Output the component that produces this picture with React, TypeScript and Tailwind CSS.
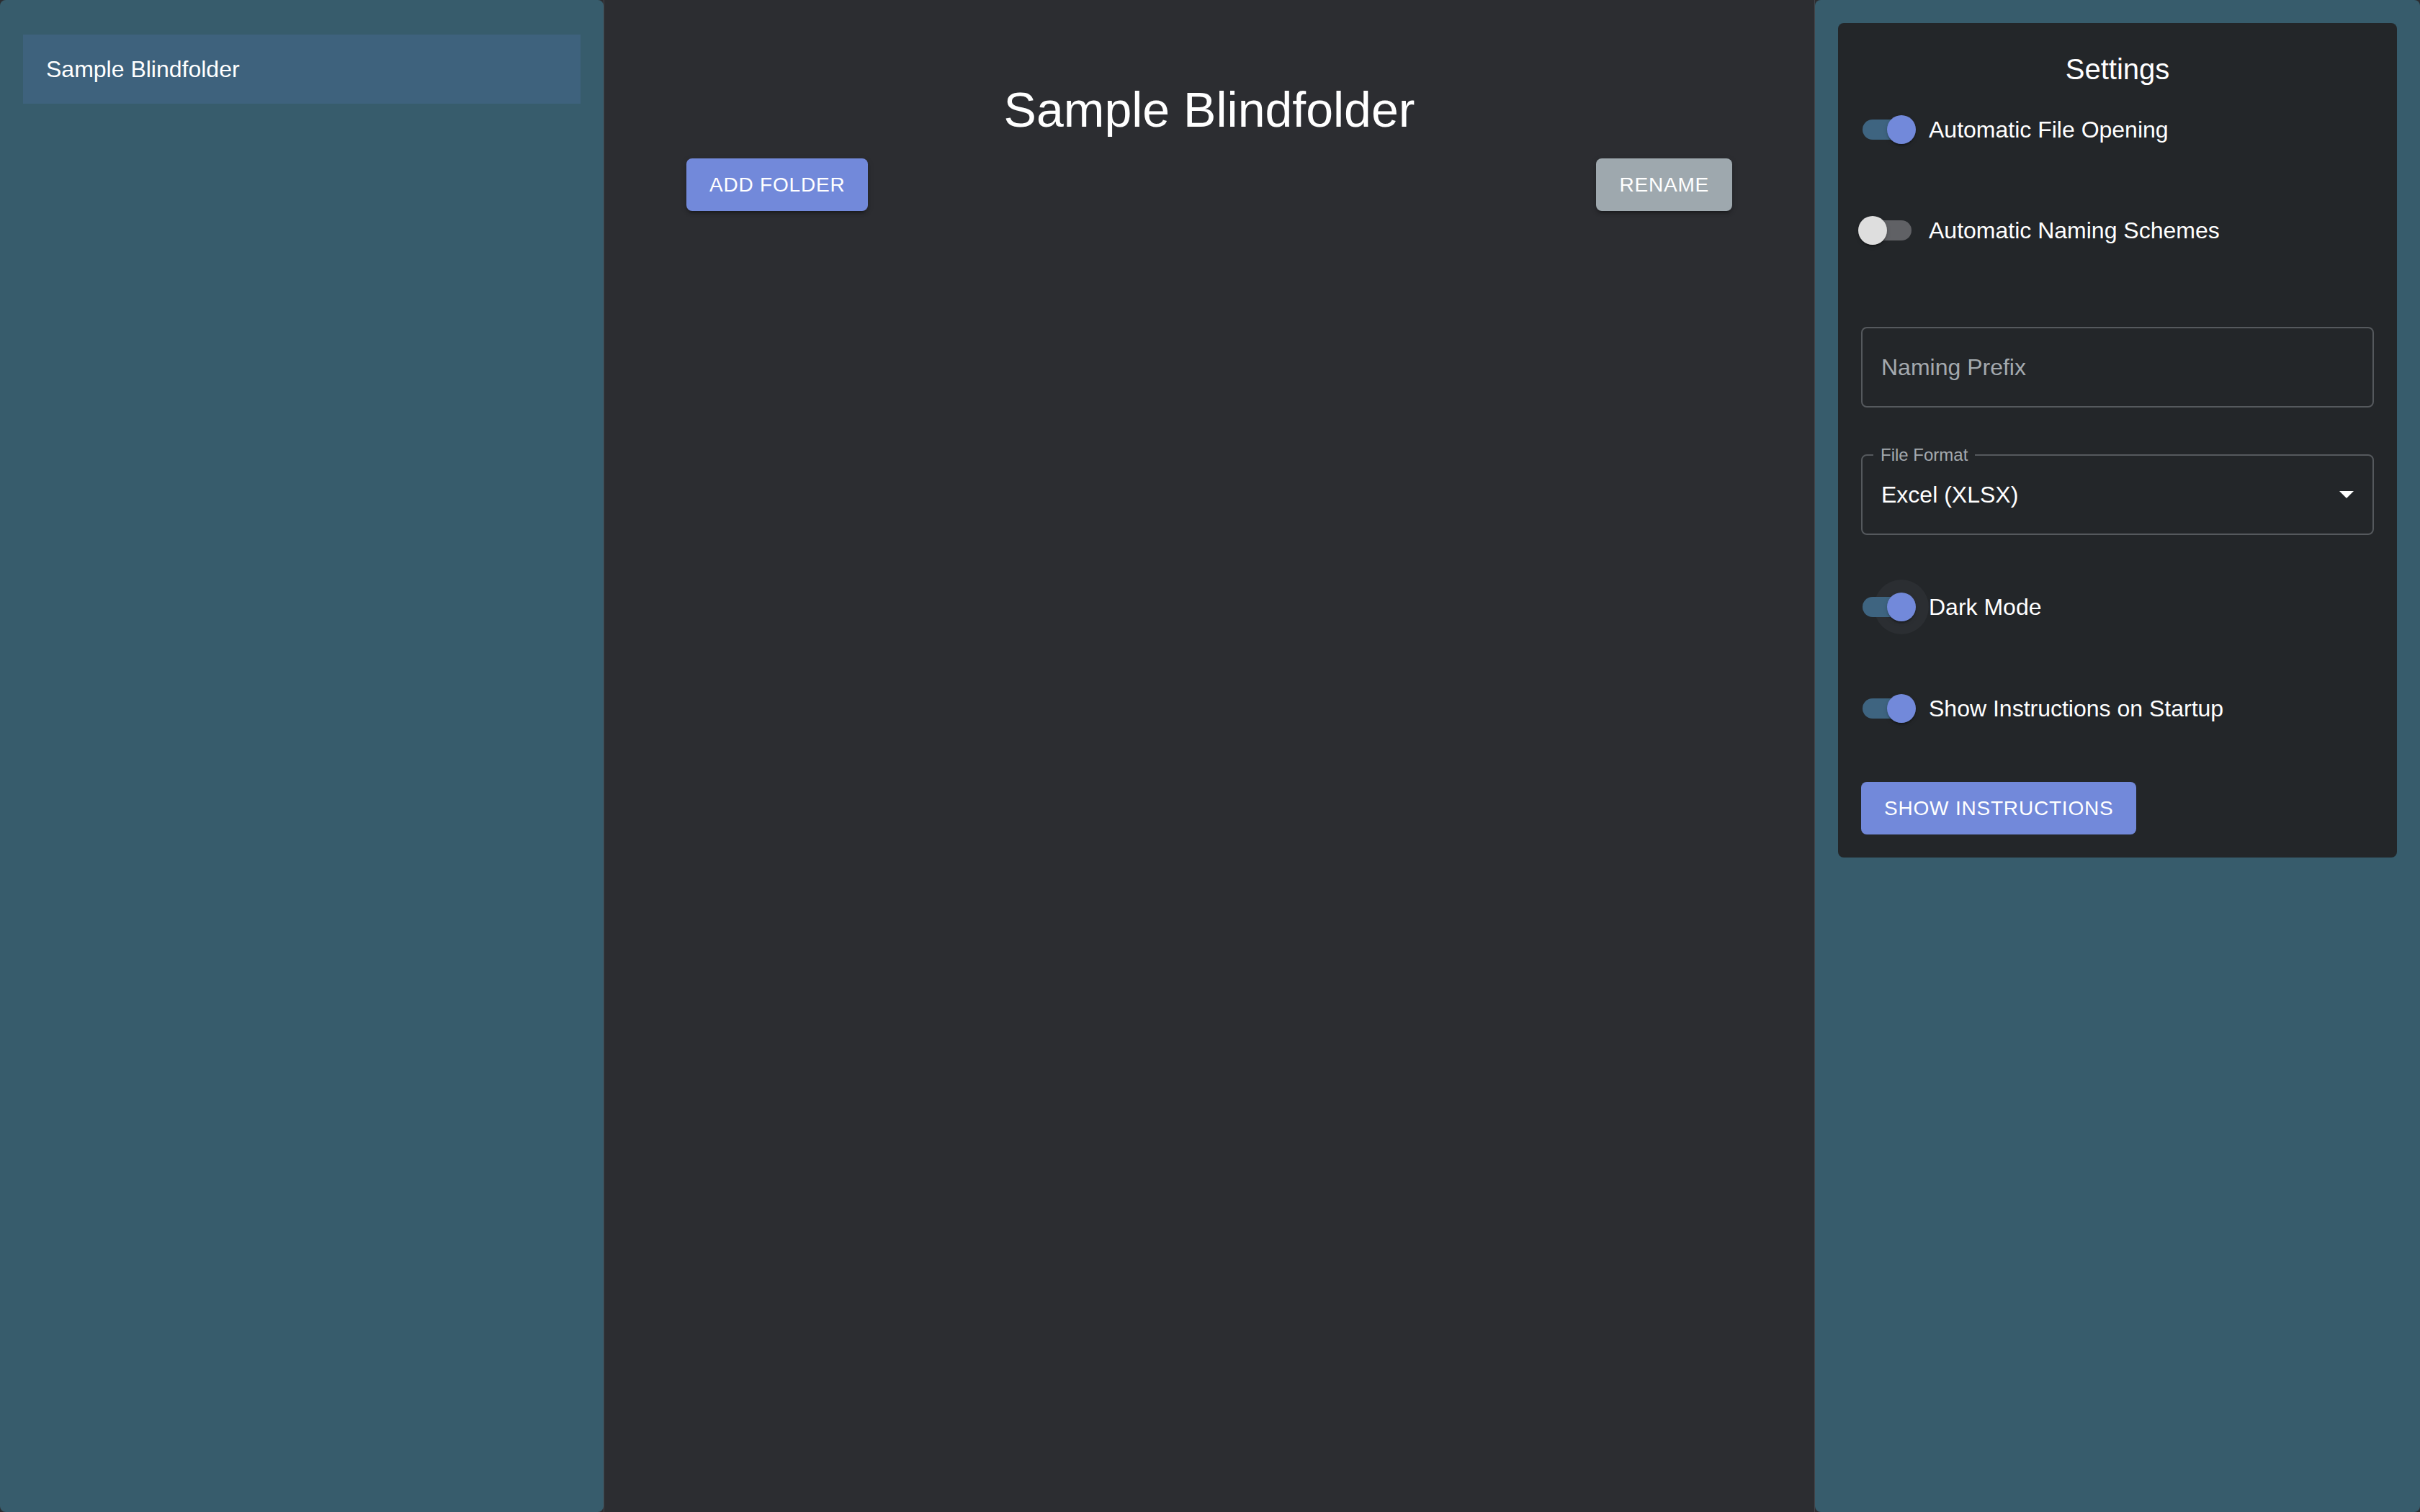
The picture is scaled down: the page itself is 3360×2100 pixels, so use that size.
import React from "react";

const font = { fontFamily: '"Liberation Sans", Arial, sans-serif' };

function Toggle({ label, checked, halo }: { label: string; checked: boolean; halo?: boolean }) {
    return (
        <div className="flex items-center -ml-[22px]">
            <div className="relative w-[116px] h-[76px] shrink-0">
                {/* hover halo sits under the track */}
                {halo && <div className="absolute left-[40px] top-0 w-[76px] h-[76px] rounded-full bg-[#2b2e32]" />}
                {/* track */}
                <div
                    className={
                        checked
                            ? "absolute left-[24px] top-[24px] w-[68px] h-[28px] rounded-full bg-[#3e6480]"
                            : "absolute left-[24px] top-[24px] w-[68px] h-[28px] rounded-full bg-[#606165]"
                    }
                />
                {/* thumb */}
                <div
                    className={
                        checked
                            ? "absolute left-[58px] top-[18px] w-[40px] h-[40px] rounded-full bg-[#7289da] shadow-[0_4px_2px_-2px_rgba(0,0,0,0.2),0_2px_2px_0_rgba(0,0,0,0.14),0_2px_6px_0_rgba(0,0,0,0.12)]"
                            : "absolute left-[18px] top-[18px] w-[40px] h-[40px] rounded-full bg-[#dedede] shadow-[0_4px_2px_-2px_rgba(0,0,0,0.2),0_2px_2px_0_rgba(0,0,0,0.14),0_2px_6px_0_rgba(0,0,0,0.12)]"
                    }
                />
            </div>
            <span className="text-[32px] leading-[48px] text-white">{label}</span>
        </div>
    );
}

export default function App() {
    return (
        <div className="flex w-full h-screen bg-[#2c2d31] overflow-hidden" style={font}>
            {/* Folder list */}
            <aside className="w-[838px] shrink-0 bg-[#375c6c] rounded-lg px-8 pt-[48px]">
                <div className="h-[96px] flex items-center px-8 bg-[#3e627d]">
                    <span className="text-[32px] leading-[48px] text-white">Sample Blindfolder</span>
                </div>
            </aside>

            {/* Folder view */}
            <main className="flex-1 border-x border-[#44464b] flex flex-col px-[114px]">
                <h1 className="mt-[110px] text-center text-[68px] leading-[84px] text-white font-normal">Sample Blindfolder</h1>
                <div className="mt-[26px] flex justify-between">
                    <button className="h-[73px] px-8 rounded-lg bg-[#7289da] text-white text-[28px] uppercase tracking-[0.8px] shadow-[0_6px_2px_-4px_rgba(0,0,0,0.2),0_4px_4px_0_rgba(0,0,0,0.14),0_2px_10px_0_rgba(0,0,0,0.12)]">
                        Add Folder
                    </button>
                    <button className="h-[73px] px-8 rounded-lg bg-[#9ea8ae] text-white text-[28px] uppercase tracking-[0.8px] shadow-[0_6px_2px_-4px_rgba(0,0,0,0.2),0_4px_4px_0_rgba(0,0,0,0.14),0_2px_10px_0_rgba(0,0,0,0.12)]">
                        Rename
                    </button>
                </div>
            </main>

            {/* Settings */}
            <aside className="w-[840px] shrink-0 bg-[#375c6c] rounded-lg p-8">
                <section className="bg-[#232629] rounded-lg p-8 flex flex-col">
                    <h2 className="text-center text-[40px] leading-[64px] text-white font-normal">Settings</h2>

                    <div className="mt-[14px]">
                        <Toggle label="Automatic File Opening" checked />
                    </div>
                    <div className="mt-[64px]">
                        <Toggle label="Automatic Naming Schemes" checked={false} />
                    </div>

                    <div className="mt-[96px] h-[112px] border-2 border-[#55595d] rounded-lg flex items-center px-[26px]">
                        <span className="text-[32px] text-[#a3a9ae]">Naming Prefix</span>
                    </div>

                    <div className="relative mt-[65px] h-[112px] border-2 border-[#55595d] rounded-lg flex items-center justify-between pl-[26px] pr-[26px]">
                        <span className="absolute left-[15px] -top-[13px] px-[10px] h-[24px] leading-[24px] bg-[#232629] text-[24px] text-[#a3a9ae]">
                            File Format
                        </span>
                        <span className="text-[32px] text-white">Excel (XLSX)</span>
                        <svg width="20" height="10" viewBox="0 0 10 5" className="fill-white">
                            <path d="M0 0l5 5 5-5z" />
                        </svg>
                    </div>

                    <div className="mt-[62px]">
                        <Toggle label="Dark Mode" checked halo />
                    </div>
                    <div className="mt-[65px]">
                        <Toggle label="Show Instructions on Startup" checked />
                    </div>

                    <div className="mt-[64px]">
                        <button className="h-[73px] px-8 rounded-lg bg-[#7289da] text-white text-[28px] uppercase tracking-[0.8px]">
                            Show Instructions
                        </button>
                    </div>
                </section>
            </aside>
        </div>
    );
}
